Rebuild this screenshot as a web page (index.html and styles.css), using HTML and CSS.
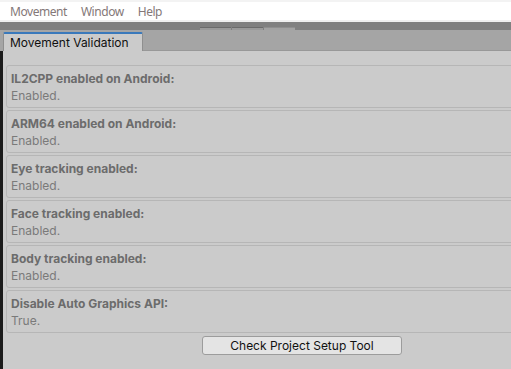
FILE: index.html
```html
<!DOCTYPE html>
<html>
<head>
<meta charset="utf-8">
<link rel="stylesheet" href="styles.css">
</head>
<body>
<div class="menubar">
  <span class="menu-item">Movement</span>
  <span class="menu-item">Window</span>
  <span class="menu-item">Help</span>
</div>
<div class="band">
  <div class="ghost"></div>
  <div class="ghost"></div>
  <div class="ghost ghost-light"></div>
</div>
<div class="tabstrip">
  <div class="tab">Movement Validation</div>
  <div class="tab-fill"></div>
</div>
<div class="content">
  <div class="edge"></div>
  <div class="main">
    <div class="box"><div class="title">IL2CPP enabled on Android:</div><div class="value">Enabled.</div></div>
    <div class="box"><div class="title">ARM64 enabled on Android:</div><div class="value">Enabled.</div></div>
    <div class="box"><div class="title">Eye tracking enabled:</div><div class="value">Enabled.</div></div>
    <div class="box"><div class="title">Face tracking enabled:</div><div class="value">Enabled.</div></div>
    <div class="box"><div class="title">Body tracking enabled:</div><div class="value">Enabled.</div></div>
    <div class="box"><div class="title">Disable Auto Graphics API:</div><div class="value">True.</div></div>
    <div class="actions"><button class="btn">Check Project Setup Tool</button></div>
  </div>
</div>
</body>
</html>
```
FILE: styles.css
```css
html, body {
  margin: 0;
  padding: 0;
  width: 511px;
  height: 369px;
  overflow: hidden;
  background: #cbcbcb;
  font-family: Inter, "Noto Sans", sans-serif;
}
.menubar {
  height: 18px;
  border-top: 2px solid #f3f3f3;
  border-bottom: 2px solid #f0f0f0;
  background: #ffffff;
  display: flex;
  align-items: center;
  padding-left: 10px;
  gap: 14px;
  font-family: "Noto Sans", sans-serif;
  font-size: 12px;
  letter-spacing: -0.45px;
  color: #847878;
}
.band {
  height: 8px;
  background: #808080;
  display: flex;
  align-items: flex-end;
  padding-left: 200px;
  gap: 1px;
}
.ghost {
  width: 31px;
  height: 2px;
  border-top: 1px solid #6b6b6b;
  background: #9a9a9a;
}
.ghost-light {
  border-top-color: #8e8e8e;
  background: #a2a2a2;
}
.tabstrip {
  height: 21px;
  background: #a5a5a5;
  display: flex;
  align-items: flex-end;
  padding-left: 3px;
}
.tab {
  width: 132px;
  height: 16px;
  padding: 1px 0 0 6px;
  border-top: 2px solid #3a79bb;
  border-left: 1px solid #8f8f8f;
  border-right: 1px solid #8f8f8f;
  background: #cbcbcb;
  font-size: 12px;
  line-height: 16px;
  color: #101010;
  border-radius: 2px 2px 0 0;
}
.tab-fill {
  flex: 1;
  border-bottom: 1px solid #989898;
}
.content {
  display: flex;
  height: 318px;
}
.edge {
  width: 3px;
  background: #1b1b1b;
}
.main {
  flex: 1;
  padding: 14px 0 0 3px;
  display: flex;
  flex-direction: column;
  gap: 2px;
}
.box {
  height: 41px;
  margin-right: -8px;
  border: 1px solid #b6b6b6;
  border-radius: 3px;
  padding: 0 0 0 4px;
  display: flex;
  flex-direction: column;
  justify-content: center;
  font-size: 12px;
  line-height: 17px;
}
.title {
  font-weight: 700;
  color: #6c6c6c;
}
.value {
  color: #7a7a7a;
}
.actions {
  display: flex;
  padding-left: 196px;
  padding-top: 1px;
}
.btn {
  width: 200px;
  height: 19px;
  padding: 0;
  border: 1px solid #9c9c9c;
  border-radius: 3px;
  background: #e4e4e4;
  font-family: Inter, "Noto Sans", sans-serif;
  font-size: 12px;
  line-height: 17px;
  color: #111111;
}
```
